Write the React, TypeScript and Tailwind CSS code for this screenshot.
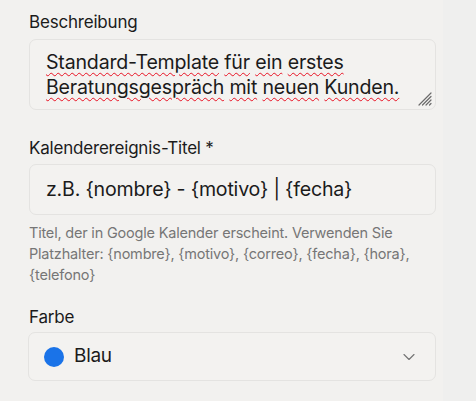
import React from 'react';
import { ChevronDown } from 'lucide-react';

const font = { fontFamily: 'Inter, "Noto Sans", sans-serif' };

const Spell: React.FC<{ children: React.ReactNode }> = ({ children }) => (
  <span className="underline decoration-wavy decoration-[#e81123] decoration-1 underline-offset-[3px]">{children}</span>
);

const ResizeGrip = () => (
  <svg className="absolute right-[3px] bottom-[3px]" width="14" height="14" viewBox="0 0 14 14">
    <g stroke="#6b6b6b" strokeWidth="1.2" strokeLinecap="round">
      <line x1="1" y1="13" x2="13" y2="1" />
      <line x1="4.5" y1="13" x2="13" y2="4.5" />
      <line x1="8" y1="13" x2="13" y2="8" />
      <line x1="11.5" y1="13" x2="13" y2="11.5" />
    </g>
  </svg>
);

export default function App() {
  return (
    <div className="flex min-h-screen bg-[#f2f1ef] text-[#1b1b1b]" style={font}>
      <div className="w-[443px] pl-[29px] pr-[7px] pt-[10px]">
        {/* Beschreibung */}
        <label className="block text-[17px] leading-[24px] tracking-[-0.2px]">Beschreibung</label>
        <div className="relative mt-[5px] h-[71px] rounded-[7px] border border-[#e4e3e1] bg-[#f3f2f0] px-[16px] pt-[10px] text-[19.6px] leading-[25px] tracking-[-0.2px]">
          <div>
            <Spell>Standard-Template</Spell> <Spell>für</Spell> <Spell>ein</Spell> <Spell>erstes</Spell>
          </div>
          <div>
            <Spell>Beratungsgespräch</Spell> <Spell>mit</Spell> <Spell>neuen</Spell> <Spell>Kunden.</Spell>
          </div>
          <ResizeGrip />
        </div>

        {/* Kalenderereignis-Titel */}
        <label className="mt-[26px] block text-[17px] leading-[24px] tracking-[-0.2px]">Kalenderereignis-Titel *</label>
        <div className="mt-[4px] flex h-[51px] items-center rounded-[7px] border border-[#e4e3e1] bg-[#f3f2f0] px-[16px] text-[19.6px] tracking-[-0.2px]">
          z.B. {'{nombre}'} - {'{motivo}'} | {'{fecha}'}
        </div>
        <p className="mt-[7px] text-[14.5px] leading-[21px] tracking-[-0.2px] text-[#767676]">
          Titel, der in Google Kalender erscheint. Verwenden Sie Platzhalter: {'{nombre}'}, {'{motivo}'}, {'{correo}'}, {'{fecha}'}, {'{hora}'}, {'{telefono}'}
        </p>

        {/* Farbe */}
        <label className="mt-[20px] block text-[17px] leading-[24px] tracking-[-0.2px]">Farbe</label>
        <div className="mt-[3px] -ml-[1px] flex h-[49px] items-center rounded-[7px] border border-[#e4e3e1] bg-[#f3f2f0] pl-[15px] pr-[16px]">
          <span className="h-[20px] w-[20px] rounded-full bg-[#1a73e8]" />
          <span className="ml-[10px] text-[19px] tracking-[-0.3px]">Blau</span>
          <ChevronDown className="ml-auto text-[#757575]" size={20} strokeWidth={1.4} />
        </div>
      </div>
      <div className="flex-1 bg-[#efefee]" />
    </div>
  );
}
